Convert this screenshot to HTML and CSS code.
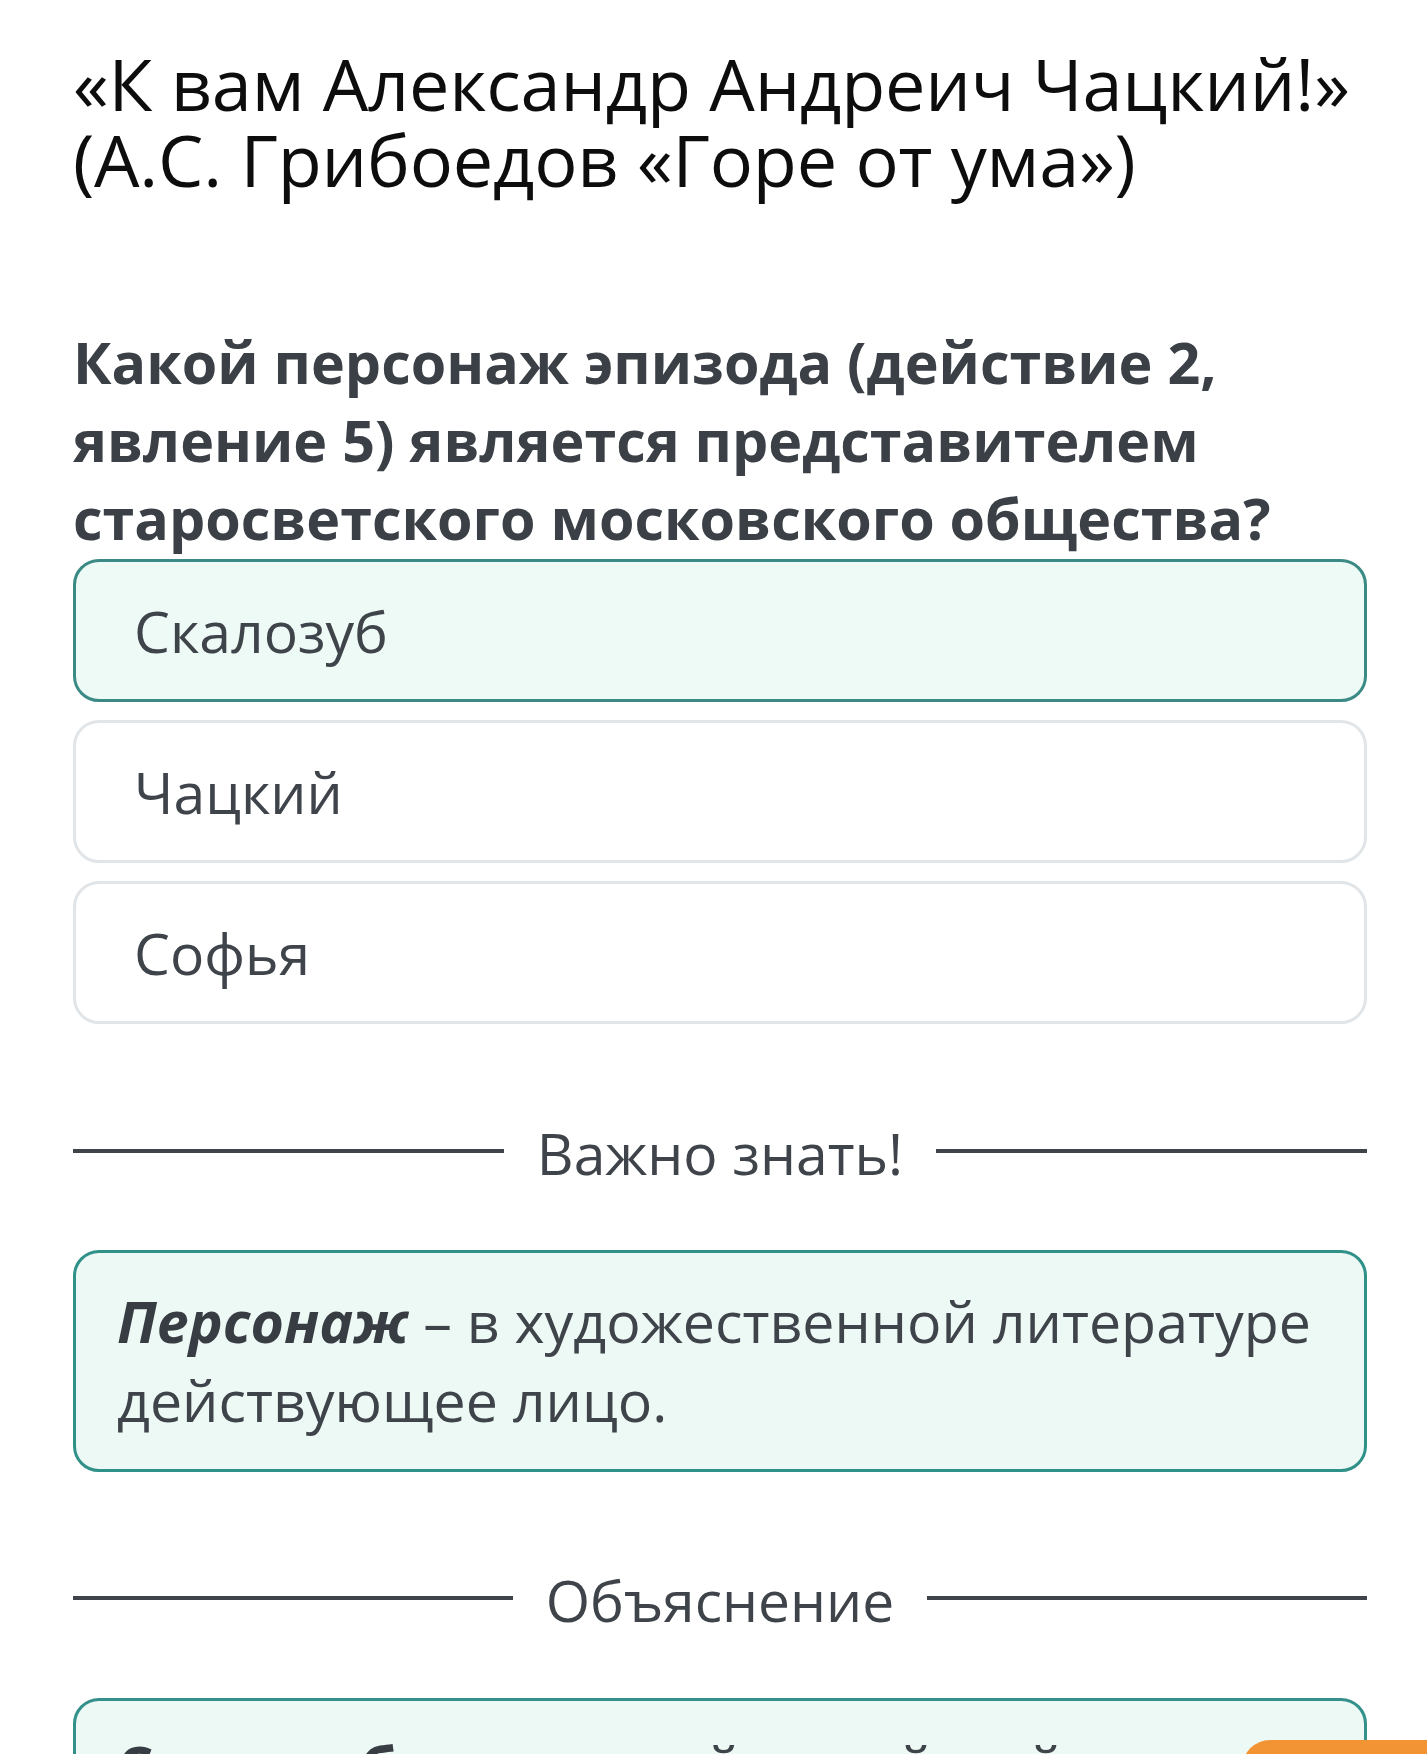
FILE: index.html
```html
<!DOCTYPE html>
<html lang="ru">
<head>
<meta charset="utf-8">
<title>Горе от ума</title>
<link rel="stylesheet" href="styles.css">
</head>
<body>
<main class="page">
  <h1 class="title">«К вам Александр Андреич Чацкий!» (А.С. Грибоедов «Горе от ума»)</h1>

  <h2 class="question">Какой персонаж эпизода (действие 2, явление 5) является представителем старосветского московского общества?</h2>

  <div class="options">
    <div class="option option-selected">Скалозуб</div>
    <div class="option">Чацкий</div>
    <div class="option">Софья</div>
  </div>

  <div class="divider divider-first">
    <span class="divider-line"></span>
    <span class="divider-text">Важно знать!</span>
    <span class="divider-line"></span>
  </div>

  <div class="info-box">
    <p class="info-text"><b><i>Персонаж</i></b> – в художественной литературе действующее лицо.</p>
  </div>

  <div class="divider">
    <span class="divider-line"></span>
    <span class="divider-text">Объяснение</span>
    <span class="divider-line"></span>
  </div>

  <div class="info-box info-box-last">
    <p class="info-text"><b>Скалозуб</b> – типичный армейский служака, мечтающий о чинах и наградах.</p>
  </div>
</main>

<button class="next-button" type="button">Далее</button>
</body>
</html>
```

FILE: styles.css
```css
html, body {
  margin: 0;
  padding: 0;
  background: #ffffff;
}

body {
  font-family: "Open Sans", "Noto Sans", sans-serif;
  color: #3d4249;
}

.page {
  padding: 45px 60px 200px 73px;
  display: flex;
  flex-direction: column;
}

.title {
  margin: 0;
  font-size: 72px;
  line-height: 76px;
  font-weight: 400;
  color: #0d0d0d;
  letter-spacing: -0.2px;
}

.question {
  margin: 126px 0 0 0;
  font-size: 57.4px;
  line-height: 78px;
  font-weight: 700;
  color: #3b4047;
}

.options {
  display: flex;
  flex-direction: column;
  gap: 18px;
  margin-top: 2px;
}

.option {
  box-sizing: border-box;
  height: 143px;
  display: flex;
  align-items: center;
  padding-left: 58px;
  border: 3px solid #e2e5e8;
  border-radius: 26px;
  background: #ffffff;
  font-size: 57px;
  color: #3f444b;
}

.option-selected {
  border-color: #3b8a85;
  background: #eefaf5;
}

.divider {
  display: flex;
  align-items: center;
  margin-top: 90px;
}

.divider-first {
  margin-top: 91px;
}

.divider-line {
  flex: 1;
  height: 4px;
  background: #3f444a;
  margin-top: -4px;
}

.divider-text {
  padding: 0 33px;
  font-size: 57px;
  line-height: 76px;
  color: #3f444b;
}

.info-box {
  margin-top: 59px;
  box-sizing: border-box;
  border: 3px solid #2f9187;
  border-radius: 26px;
  background: #edf9f4;
  padding: 29px 36px 29px 41px;
}

.info-text {
  margin: 0;
  font-size: 57.3px;
  line-height: 79px;
  color: #3f444b;
}

.info-text b {
  font-weight: 700;
  color: #383d44;
}

.info-box-last {
  margin-top: 60px;
  border-color: #34908a;
  padding-top: 26px;
}

.next-button {
  position: fixed;
  left: 1242px;
  bottom: -66px;
  width: 200px;
  height: 80px;
  border: none;
  border-top-left-radius: 28px;
  background: #f29433;
  color: #ffffff;
  font-family: "Open Sans", sans-serif;
  font-size: 40px;
  font-weight: 700;
  padding: 0;
}
```
